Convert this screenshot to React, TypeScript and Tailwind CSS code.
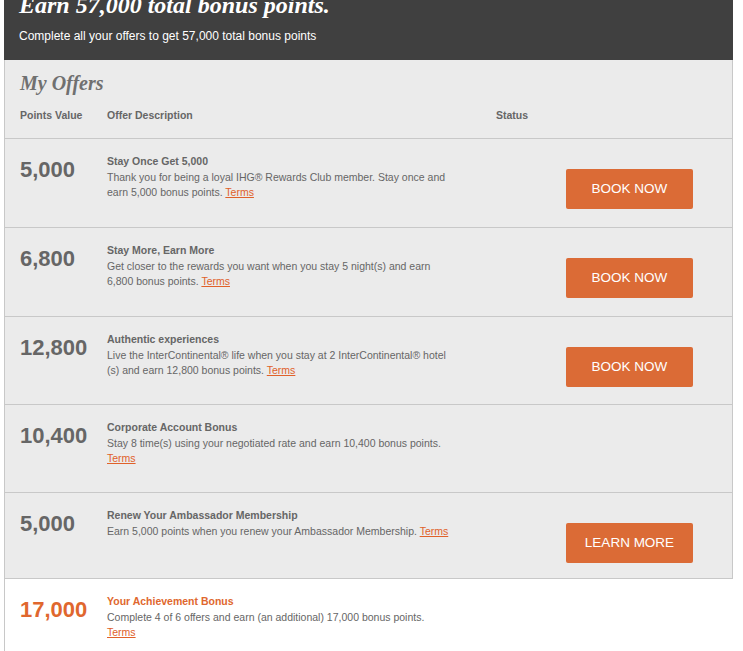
const sans = { fontFamily: '"Liberation Sans", Arial, sans-serif' };
const serif = { fontFamily: '"Liberation Serif", Georgia, serif' };

type Offer = {
  points: string;
  title: string;
  desc: string;
  action?: string;
  height: string;
  highlight?: boolean;
};

const offers: Offer[] = [
  {
    points: '5,000',
    title: 'Stay Once Get 5,000',
    desc: 'Thank you for being a loyal IHG® Rewards Club member. Stay once and earn 5,000 bonus points.',
    action: 'BOOK NOW',
    height: 'h-[89px]',
  },
  {
    points: '6,800',
    title: 'Stay More, Earn More',
    desc: 'Get closer to the rewards you want when you stay 5 night(s) and earn 6,800 bonus points.',
    action: 'BOOK NOW',
    height: 'h-[89px]',
  },
  {
    points: '12,800',
    title: 'Authentic experiences',
    // the original breaks inside "hotel(s)"
    desc: 'Live the InterContinental® life when you stay at 2 InterContinental® hotel\u200B(s) and earn 12,800 bonus points.',
    action: 'BOOK NOW',
    height: 'h-[88px]',
  },
  {
    points: '10,400',
    title: 'Corporate Account Bonus',
    desc: 'Stay 8 time(s) using your negotiated rate and earn 10,400 bonus points.',
    height: 'h-[88px]',
  },
  {
    points: '5,000',
    title: 'Renew Your Ambassador Membership',
    desc: 'Earn 5,000 points when you renew your Ambassador Membership.',
    action: 'LEARN MORE',
    height: 'h-[86px]',
  },
];

const achievement: Offer = {
  points: '17,000',
  title: 'Your Achievement Bonus',
  desc: 'Complete 4 of 6 offers and earn (an additional) 17,000 bonus points.',
  height: 'h-[80px]',
  highlight: true,
};

function OfferRow({ offer }: { offer: Offer }) {
  const accent = offer.highlight;
  return (
    <div
      className={`flex border-t border-[#c8c8c8] pl-[15px] pt-[15px] ${offer.height} ${
        accent ? 'bg-white' : 'bg-[#ebebeb]'
      }`}
    >
      <div
        className={`mt-[5px] w-[87px] shrink-0 text-[22px] font-bold leading-[22px] ${
          accent ? 'text-[#e0672e]' : 'text-[#666666]'
        }`}
      >
        {offer.points}
      </div>
      <div className="w-[346px] shrink-0 text-[10.5px] leading-[15px] text-[#666666]">
        <div className={`mb-px font-bold ${accent ? 'text-[#e0672e]' : 'text-[#666666]'}`}>{offer.title}</div>
        <p>
          {offer.desc}{' '}
          <a href="#" className="text-[#e0612a] underline">
            Terms
          </a>
        </p>
      </div>
      {offer.action && (
        <button
          type="button"
          className="ml-[113px] mt-[15px] flex h-[40px] w-[127px] shrink-0 items-center justify-center rounded-[2px] bg-[#db6b36] text-[13.5px] text-white"
        >
          {offer.action}
        </button>
      )}
    </div>
  );
}

export default function App() {
  return (
    <div className="min-h-[651px] bg-white" style={sans}>
      <div className="ml-[4px] w-[729px]">
        <header className="flex h-[60px] flex-col bg-[#404040] pl-[15px] text-white">
          <h1 className="-mt-[7px] text-[24px] font-bold italic leading-[24px]" style={serif}>
            Earn 57,000 total bonus points.
          </h1>
          <p className="mt-[11px] text-[12px] leading-[16px]">
            Complete all your offers to get 57,000 total bonus points
          </p>
        </header>

        <div className="border-x border-[#c8c8c8] bg-[#ebebeb]">
          <div className="h-[78px] pl-[15px] pt-[11px]">
            <h2 className="text-[20px] font-bold italic leading-[24px] text-[#707070]" style={serif}>
              My Offers
            </h2>
            <div className="mt-[13px] flex text-[10.5px] font-bold leading-[15px] text-[#666666]">
              <div className="w-[87px]">Points Value</div>
              <div className="w-[389px]">Offer Description</div>
              <div>Status</div>
            </div>
          </div>
          {offers.map((offer, i) => (
            <OfferRow key={i} offer={offer} />
          ))}
        </div>

        <div className="border-l border-[#c8c8c8]">
          <OfferRow offer={achievement} />
        </div>
      </div>
    </div>
  );
}
